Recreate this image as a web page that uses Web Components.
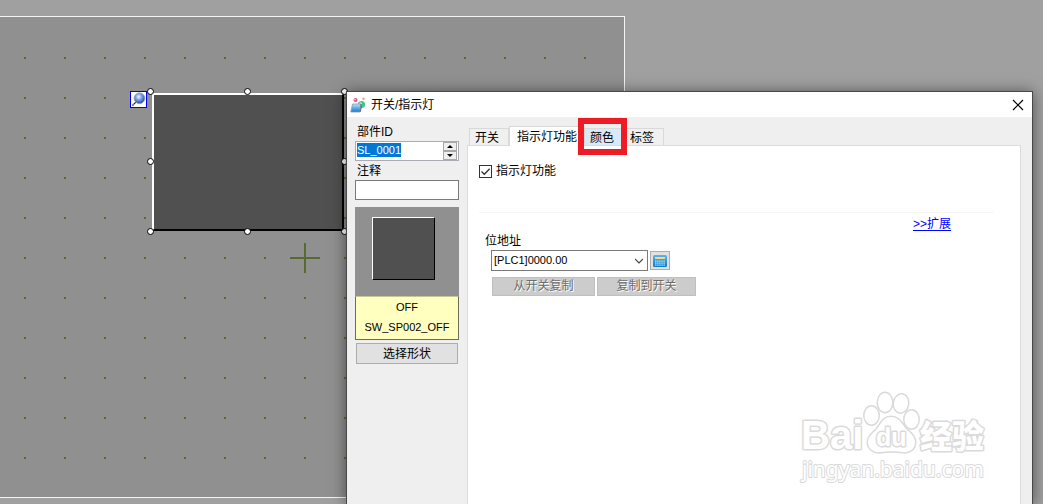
<!DOCTYPE html>
<html lang="zh-CN">
<head>
<meta charset="utf-8">
<title>开关/指示灯</title>
<style>
  html, body { margin: 0; height: 100%; }
  body { font: 12px/16px "Liberation Sans", "Noto Sans CJK SC", sans-serif; color: #000; background: #a0a0a0; overflow: hidden; }
</style>
</head>
<body>
<editor-workspace>
  <design-sheet>
    <selected-part></selected-part>
  </design-sheet>
  <part-dialog slot="window" heading="开关/指示灯">
    <part-summary slot="side"></part-summary>
    <tab-pages>
      <lamp-page></lamp-page>
      <page-mark slot="mark"></page-mark>
    </tab-pages>
  </part-dialog>
</editor-workspace>

<script>
const define = (name, html, setup) => {
  const template = document.createElement('template');
  template.innerHTML = html;
  customElements.define(name, class extends HTMLElement {
    constructor() {
      super();
      this.attachShadow({ mode: 'open' }).append(template.content.cloneNode(true));
    }
    connectedCallback() { if (setup) setup(this, this.shadowRoot); }
  });
};

define('editor-workspace', `
  <style>
    :host { display: block; position: relative; box-sizing: border-box; height: 100vh; padding: 16px 0 6px; overflow: hidden; background: #a0a0a0; }
    ::slotted([slot=window]) { position: absolute; top: 91px; left: 346px; right: 10px; bottom: 0; }
  </style>
  <slot></slot><slot name="window"></slot>`);

/* Drawing sheet with a 40px snap grid and an origin cross */
define('design-sheet', `
  <style>
    :host { display: block; position: relative; box-sizing: border-box; height: 100%; width: calc(100% - 418px);
      border: 1px solid #f4f4f4; border-left: 0; background: #909090; }
    .grid { position: absolute; inset: 0; width: 100%; height: 100%; }
    .origin { position: absolute; left: 290px; top: 226px; width: 30px; height: 30px; }
    ::slotted(selected-part) { position: absolute; left: 152px; top: 76px; }
  </style>
  <svg class="grid" aria-hidden="true"><defs><pattern id="dots" width="40" height="40" patternUnits="userSpaceOnUse">
    <rect x="24" width="2" height="2" y="0" fill="#586c30"/></pattern></defs>
    <svg y="40" width="100%" height="100%" overflow="visible"><rect width="100%" height="425" fill="url(#dots)"/></svg></svg>
  <svg class="origin" viewBox="0 0 30 30" aria-hidden="true"><path d="M0 15h30M15 0v30" stroke="#556b2f" stroke-width="2"/></svg>
  <slot></slot>`);

define('selected-part', `
  <style>
    :host { display: block; box-sizing: border-box; width: 192px; height: 138px; background: #505050;
      border: 2px solid; border-color: #fff #000 #000 #fff; }
    i { position: absolute; box-sizing: border-box; width: 7px; height: 7px; border: 1px solid #000; border-radius: 50%; background: #fff; }
    .n { top: -7px } .m { top: 63px } .s { top: 133px }
    .w { left: -7px } .c { left: 90px } .e { left: 187px }
    .zoom { position: absolute; left: -24px; top: -4px; width: 17px; height: 17px; }
  </style>
  <svg class="zoom" viewBox="0 0 17 17" aria-hidden="true">
    <defs><radialGradient id="g" cx=".42" cy=".36" r=".6"><stop stop-color="#f4f9ff"/><stop offset=".45" stop-color="#7fa5ee"/><stop offset="1" stop-color="#2b4fae"/></radialGradient></defs>
    <rect x=".5" y=".5" width="16" height="16" fill="#fff" stroke="#0000f0"/>
    <path d="M2.500 14.500l4-4" stroke="#222" stroke-width="1.500" stroke-dasharray="1.500 .5"/>
    <circle cx="9.500" cy="7.300" r="5.300" fill="url(#g)" stroke="#8b97ac"/>
  </svg>
  <i class="n w"></i><i class="n c"></i><i class="n e"></i>
  <i class="m w"></i><i class="m e"></i>
  <i class="s w"></i><i class="s c"></i><i class="s e"></i>`);

define('part-dialog', `
  <style>
    :host { display: flex; flex-direction: column; box-sizing: border-box; border: 1px solid #484848; border-bottom: 0;
      background: #efefef; box-shadow: 0 1px 14px rgba(0,0,0,.5); }
    header { display: flex; align-items: center; height: 25px; padding: 0 8px 0 3px; gap: 5px; background: #fff; }
    h1 { flex: 1; margin: 0; font: inherit; }
    header svg { display: block; flex: none; }
    button { display: flex; padding: 0; border: 0; background: none; }
    main { flex: 1; display: flex; gap: 8px; padding: 0 11px 0 8px; min-height: 0; }
  </style>
  <header>
    <svg width="16" height="16" viewBox="0 0 16 16" aria-hidden="true">
      <defs><linearGradient id="b" x2="0" y2="1"><stop stop-color="#bfe4fa"/><stop offset=".5" stop-color="#59aeea"/><stop offset="1" stop-color="#2574cc"/></linearGradient></defs>
      <circle cx="11.500" cy="7.500" r="3.600" fill="#3fc68c"/><circle cx="10.500" cy="6.500" r="1.200" fill="#c8f5df"/>
      <circle cx="5.500" cy="3" r="2" fill="#ec4f89"/><circle cx="5" cy="2.600" r=".7" fill="#fff"/>
      <circle cx="13.500" cy="1.800" r="1.200" fill="#f2a64e"/>
      <path d="M2.500 7h8.500l-1 8H.8z" fill="url(#b)" stroke="#8c98a5" stroke-width=".8"/>
      <path d="M11 7v5l-1 3" stroke="#626b76" fill="none"/>
    </svg>
    <h1></h1>
    <button aria-label="关闭"><svg width="12" height="12" viewBox="0 0 12 12"><path d="M1 1l10 10M11 1L1 11" stroke="#000" stroke-width="1.200"/></svg></button>
  </header>
  <main><slot name="side"></slot><slot></slot></main>`,
  (el, root) => { root.querySelector('h1').textContent = el.getAttribute('heading'); });

define('part-summary', `
  <style>
    :host { display: block; flex: none; width: 104px; padding-top: 7px; }
    label { display: block; height: 17px; line-height: 16px; padding-left: 2px; }
    .box { display: flex; box-sizing: border-box; height: 20px; border: 1px solid #7a7a7a; background: #fff; }
    .spin { border-color: #ababb3; padding-right: 1px; }
    .gap { margin-top: 2px; }
    input { flex: 1; min-width: 0; height: 14px; margin-top: 1px; padding: 0 1px; border: 0; outline: 0; background: none; color: inherit; font: 11px/14px "Liberation Sans", sans-serif; }
    input::selection { background: #0078d7; color: #fff; }
    .arrows { display: flex; flex-direction: column; width: 14px; }
    .arrows button { flex: 1; display: grid; place-items: center; padding: 0; border: 1px solid #a8a8a8; background: #efefef; min-height: 0; }
    .preview { display: grid; justify-content: start; box-sizing: border-box; height: 89px; margin-top: 7px; padding: 10px 17px; background: #909090; }
    .preview div { box-sizing: border-box; width: 63px; height: 63px; background: #505050; border: 1px solid; border-color: #fff #000 #000 #fff; }
    .state { box-sizing: border-box; height: 44px; border: 1px solid #6d6d5c; border-top-color: #c6c694; background: #ffffc0; text-align: center; font-size: 11px; line-height: 20px; }
    .pick { display: block; width: 102px; height: 21px; margin: 3px 1px 0; padding: 0; border: 1px solid #adadad; background: #e1e1e1; color: inherit; font: inherit; line-height: 18px; }
  </style>
  <label for="id">部件ID</label>
  <div class="box spin"><input id="id" value="SL_0001">
    <div class="arrows">
      <button aria-label="增加"><svg width="6" height="3" viewBox="0 0 6 3"><path d="M0 3l3-3 3 3z"/></svg></button>
      <button aria-label="减少"><svg width="6" height="3" viewBox="0 0 6 3"><path d="M0 0h6L3 3z"/></svg></button>
    </div></div>
  <label class="gap" for="note">注释</label>
  <div class="box"><input id="note"></div>
  <div class="preview"><div></div></div>
  <div class="state">OFF<br>SW_SP002_OFF</div>
  <button class="pick">选择形状</button>`,
  (el, root) => { const id = root.getElementById('id'); id.focus(); id.select(); });

define('tab-pages', `
  <style>
    :host { flex: 1; display: flex; flex-direction: column; min-width: 0; padding-top: 9px; }
    nav { display: flex; align-items: flex-end; height: 19px; padding-left: 2px; }
    button { position: relative; box-sizing: border-box; height: 17px; padding: 0 9px 0 5px; border: 1px solid #d9d9d9; border-bottom: 0; background: #f0f0f0; color: inherit; font: inherit; line-height: 18px; white-space: nowrap; }
    button[aria-selected=true] { z-index: 1; height: 20px; margin-bottom: -1px; padding: 0 6px 0 7px; background: #fff; }
    .hot { z-index: 2; background: #d8eaf9; }
    .frame { position: absolute; inset: -11px -4px -10px -7px; border: 6px solid #ed1c24; }
    section { position: relative; flex: 1; border: 1px solid #dcdcdc; border-bottom: 0; background: #fff; min-height: 0; }
    ::slotted([slot=mark]) { position: absolute; right: 30px; bottom: 20px; }
  </style>
  <nav role="tablist">
    <button role="tab" aria-selected="false">开关</button><button role="tab" aria-selected="true">指示灯功能</button><button role="tab" aria-selected="false" class="hot">颜色<span class="frame"></span></button><button role="tab" aria-selected="false">标签</button>
  </nav>
  <section role="tabpanel"><slot></slot><slot name="mark"></slot></section>`);

define('lamp-page', `
  <style>
    :host { display: block; padding: 16px 26px 0 11px; }
    .check { display: flex; align-items: center; gap: 4px; height: 18px; }
    .check input { appearance: none; flex: none; width: 13px; height: 13px; margin: 0; border: 1px solid #333;
      background: #fff url("data:image/svg+xml,%3Csvg xmlns='http://www.w3.org/2000/svg' viewBox='0 0 11 11'%3E%3Cpath d='M1.500 5.500l2.800 2.800L9.700 2.700' fill='none' stroke='%23333' stroke-width='1.300'/%3E%3C/svg%3E"); }
    hr { margin: 32px 0 0; border: 0; height: 1px; background: #f6f6f6; }
    .more { display: flex; justify-content: flex-end; padding: 3px 43px 0 0; }
    a { color: #00f; text-underline-offset: 2px; }
    .caption { display: block; height: 17px; padding-left: 6px; margin-top: 1px; }
    .row { display: flex; gap: 2px; padding-left: 12px; }
    .combo { position: relative; display: block; width: 157px; }
    select { appearance: none; box-sizing: border-box; width: 100%; height: 21px; padding: 0 20px 2px 2px; border: 1px solid #7a7a7a; border-radius: 0; background: #fff; color: #000; font: 11px/16px "Liberation Sans", sans-serif; }
    .combo svg { position: absolute; right: 5px; top: 8px; pointer-events: none; }
    .keys { display: grid; place-items: center; width: 20px; height: 19px; margin-top: 1px; padding: 0; border: 1px solid #adadad; background: #e1e1e1; }
    .copy { padding: 6px 0 0 13px; }
    .copy button { box-sizing: border-box; height: 19px; padding: 0; border: 1px solid #bfbfbf; background: #ccc; color: #6d6d6d; text-shadow: 1px 1px #fff; font: inherit; line-height: 17px; }
    .from { width: 103px; } .to { width: 99px; }
  </style>
  <label class="check"><input type="checkbox" checked>指示灯功能</label>
  <hr>
  <div class="more"><a href="#more">&gt;&gt;扩展</a></div>
  <label class="caption" for="address">位地址</label>
  <div class="row">
    <span class="combo"><select id="address"><option>[PLC1]0000.00</option></select>
      <svg width="8" height="6" viewBox="0 0 8 6" aria-hidden="true"><path d="M0 1l4 4 4-4" fill="none" stroke="#444" stroke-width="1.200"/></svg></span>
    <button class="keys" aria-label="输入地址"><svg width="14" height="12" viewBox="0 0 14 12">
      <defs><linearGradient id="k" x2="0" y2="1"><stop stop-color="#58b8ed"/><stop offset="1" stop-color="#0b78c4"/></linearGradient></defs>
      <rect width="14" height="12" rx="1.500" fill="url(#k)"/><path d="M2 3h10" stroke="#ffd480" stroke-width="2"/>
      <path d="M2 6.200h10M2 8.200h10M2 10.200h10" stroke="#a9e6ff" stroke-width="1.200" stroke-dasharray="1.500 .6"/></svg></button>
  </div>
  <div class="row copy"><button class="from" disabled>从开关复制</button><button class="to" disabled>复制到开关</button></div>`);

define('page-mark', `
  <style>
    :host { display: block; width: 190px; height: 94px; }
    svg { display: block; overflow: visible; }
    .shape { fill: #fff; stroke: #dadada; stroke-width: 3; paint-order: stroke; stroke-linejoin: round; }
    .name { font: bold 40px "Liberation Sans", sans-serif; }
    .du { font: bold 25px "Liberation Sans", sans-serif; }
    .cjk { font: 900 32px "Noto Sans CJK SC", sans-serif; }
    .site { font: 21px "Noto Sans", sans-serif; stroke-width: 2; }
  </style>
  <svg width="190" height="94" viewBox="0 0 190 94" aria-hidden="true">
    <g class="shape">
      <text class="name" x="1" y="59">Bai</text>
      <ellipse cx="71.500" cy="25.500" rx="7" ry="9"/><ellipse cx="85" cy="12.500" rx="7" ry="9.500"/>
      <ellipse cx="101" cy="13.500" rx="7" ry="9" transform="rotate(8 101 13.500)"/><ellipse cx="111.500" cy="29.500" rx="7" ry="9"/>
      <path d="M91 27c9 0 11 8 16 13 5 4 8 8 8 12 0 8-7 11-12 10-6-1-17-1-22 0-7 1-13-3-13-10 0-5 4-8 8-12 5-5 6-13 15-13z"/>
      <text class="du" x="76" y="56">du</text>
      <text class="cjk" x="120" y="58">经验</text>
      <text class="site" x="2" y="87">jingyan.baidu.com</text>
    </g>
  </svg>`);
</script>
</body>
</html>
